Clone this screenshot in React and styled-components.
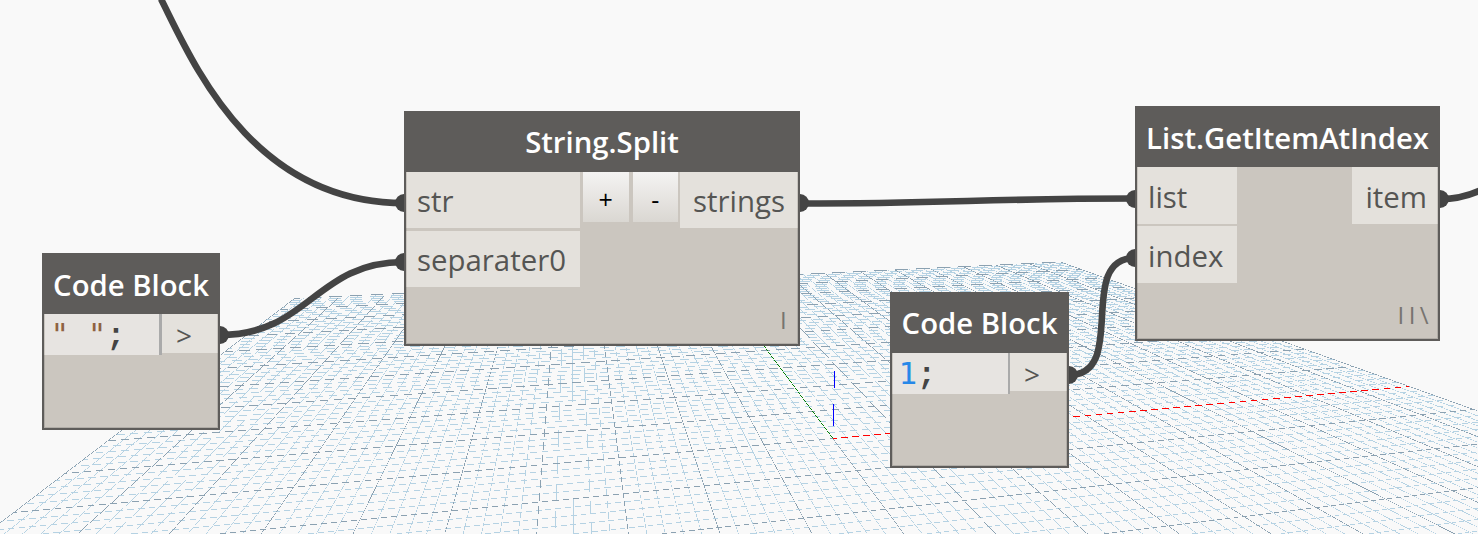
import React from "react";
import styled, { createGlobalStyle } from "styled-components";

const GlobalStyle = createGlobalStyle`
  body { margin: 0; background: #f9f9f9; overflow: hidden; }
  *, *::before, *::after { box-sizing: border-box; }
`;

const Workspace = styled.main`
  position: relative;
  width: 1478px;
  height: 534px;
  overflow: hidden;
  background: #f9f9f9;
  font-family: "Open Sans", sans-serif;
  color: #555553;
`;

const Layer = styled.svg`
  position: absolute;
  inset: 0;
  width: 1478px;
  height: 534px;
`;

const NodeFrame = styled.section`
  position: absolute;
  left: ${(p) => p.$x}px;
  top: ${(p) => p.$y}px;
  width: ${(p) => p.$w}px;
  height: ${(p) => p.$h}px;
  display: flex;
  flex-direction: column;
  border: 2px solid #5e5c5a;
  background: #5e5c5a;
`;

const NodeTitle = styled.header`
  flex: none;
  height: 59px;
  display: flex;
  align-items: center;
  justify-content: center;
  padding-bottom: ${(p) => p.$lift || 0}px;
  color: #fff;
  font-size: 29.3px;
  font-weight: 620;
  line-height: 38px;
  white-space: nowrap;
`;

const NodeBody = styled.div`
  position: relative;
  flex: 1;
  display: flex;
  justify-content: space-between;
  align-items: flex-start;
  background: #cbc6bf;
  box-shadow: inset 1px 0 #b0aca6, inset -1px -1px #b0aca6;
`;

const PortColumn = styled.div`
  display: flex;
  flex-direction: column;
  gap: ${(p) => p.$gap || 0}px;
  width: ${(p) => p.$w}px;
`;

const Port = styled.div`
  height: ${(p) => p.$h || 56}px;
  padding: ${(p) => p.$drop || 1}px ${(p) => p.$inset || 10}px 0;
  display: flex;
  align-items: center;
  justify-content: ${(p) => (p.$out ? "flex-end" : "flex-start")};
  background: #e4e1dc;
  border-${(p) => (p.$out ? "right" : "left")}: 1px solid #c9c5bf;
  font-size: 29.4px;
  line-height: 38px;
`;

const ButtonPair = styled.div`
  flex: 1;
  display: flex;
  gap: 4px;
  padding: 0 2px 0 3px;
`;

const StepButton = styled.button`
  flex: 1;
  height: 50px;
  border: 0;
  padding: 3px 0 0;
  background: linear-gradient(#f4f3f2, #dad7d2);
  color: #000;
  font: 500 25px/30px "Open Sans", sans-serif;
`;

const Lacing = styled.span`
  position: absolute;
  right: ${(p) => p.$right}px;
  bottom: 9px;
  color: #777470;
  font-size: 24px;
  font-weight: 500;
  line-height: 30px;
  letter-spacing: 4.4px;
`;

const CodeRow = styled.div`
  flex: 1;
  display: flex;
  align-items: flex-start;
`;

const CodeEditor = styled.code`
  flex: 1;
  height: 41px;
  padding-left: 5.5px;
  display: flex;
  align-items: baseline;
  background: #e7e4e1;
  border-left: 1px solid #c9c5bf;
  border-right: ${(p) => p.$rule}px solid #aaa;
  font: 31px/41px "DejaVu Sans Mono", monospace;
  white-space: pre;
`;

const Token = styled.span`
  color: ${(p) => p.$color};
`;

const Terminator = styled(Token)`
  font-family: "Liberation Mono", monospace;
  font-weight: 700;
`;

const CodeOutput = styled.div`
  width: ${(p) => p.$w}px;
  height: ${(p) => p.$h}px;
  padding: 0 0 0 14px;
  border-right: 1px solid #c9c5bf;
  background: #e4e1dc;
  font-size: 28px;
  line-height: 42px;
`;

/* Ground plane: u runs along the red axis, v along the green one, both -10..10. */
const ORIGIN = [832.9, 438.53];
const VANISH_U = [4722, 87.4];
const VANISH_V = [571.5, 87.4];
const A = 0.017397;
const B = 0.08378;
const NEAR = -7;

const project = (u, v) => {
  const d = 1 + A * u + B * v;
  return [
    (ORIGIN[0] + A * u * VANISH_U[0] + B * v * VANISH_V[0]) / d,
    (ORIGIN[1] + A * u * VANISH_U[1] + B * v * VANISH_V[1]) / d,
  ];
};

/* A line drawn as a sub-pixel wide strip, so it breaks into dashes when not antialiased. */
const strip = ([x1, y1], [x2, y2], width = 0.6) => {
  const len = Math.hypot(x2 - x1, y2 - y1);
  const nx = (-(y2 - y1) / len) * (width / 2);
  const ny = ((x2 - x1) / len) * (width / 2);
  const f = (n) => n.toFixed(3);
  return `M${f(x1 + nx)} ${f(y1 + ny)}L${f(x2 + nx)} ${f(y2 + ny)}L${f(x2 - nx)} ${f(y2 - ny)}L${f(x1 - nx)} ${f(y1 - ny)}Z`;
};

const minor = [];
const major = [];
for (let i = -50; i <= 50; i++) {
  const t = i / 5;
  const bucket = i % 5 === 0 ? major : minor;
  bucket.push(strip(project(t, NEAR), project(t, 10)));
  if (t >= NEAR) bucket.push(strip(project(-10, t), project(10, t)));
}

function GroundGrid() {
  return (
    <Layer viewBox="0 0 1478 534" shapeRendering="crispEdges">
      {minor.map((d, i) => <path key={i} d={d} fill="#b5d2e3" />)}
      {major.map((d, i) => <path key={i} d={d} fill="#8ba1b1" />)}
      <path d={strip(project(0, 0), project(10, 0))} fill="#f00" />
      <path d={strip(project(0, 0), project(0, 10))} fill="#008000" />
      <path d={strip(ORIGIN, [834.66, 371])} fill="#00f" />
    </Layer>
  );
}

const WIRES = [
  "M161 -1C191 58 250 203 404 203",
  "M220 335C309 335 315 262 404 262",
  "M800 203.5C951 203.5 984 198.5 1135 198.5",
  "M1069 375C1129 375 1075 258 1135 258",
  "M1440 199C1458 199 1471 195 1483 189",
];
const SOCKETS = [
  [404, 203], [404, 262], [220, 335], [800, 203],
  [1135, 199], [1135, 258], [1069, 375], [1440, 199],
];

function Wires() {
  return (
    <Layer viewBox="0 0 1478 534">
      {WIRES.map((d) => <path key={d} d={d} fill="none" stroke="#444" strokeWidth="6.6" />)}
      {SOCKETS.map(([x, y]) => <circle key={`${x},${y}`} cx={x} cy={y} r="9" fill="#444" />)}
    </Layer>
  );
}

function CodeBlock({ x, y, w, h, lift, rule, outW, outH, children }) {
  return (
    <NodeFrame $x={x} $y={y} $w={w} $h={h}>
      <NodeTitle $lift={lift}>Code Block</NodeTitle>
      <NodeBody>
        <CodeRow>
          <CodeEditor $rule={rule}>
            {children}
            <Terminator $color="#444">;</Terminator>
          </CodeEditor>
          <CodeOutput $w={outW} $h={outH}>&gt;</CodeOutput>
        </CodeRow>
      </NodeBody>
    </NodeFrame>
  );
}

export default function App() {
  return (
    <Workspace>
      <GlobalStyle />
      <GroundGrid />
      <Wires />
      <CodeBlock x={42} y={253} w={178} h={177} rule={3} outW={56} outH={39}>
        <Token $color="#8f6241">{'" "'}</Token>
      </CodeBlock>
      <NodeFrame $x={404} $y={111} $w={396} $h={235}>
        <NodeTitle $lift={2}>String.Split</NodeTitle>
        <NodeBody>
          <PortColumn $w={174} $gap={3}>
            <Port>str</Port>
            <Port>separater0</Port>
          </PortColumn>
          <ButtonPair>
            <StepButton>+</StepButton>
            <StepButton>-</StepButton>
          </ButtonPair>
          <PortColumn $w={118}>
            <Port $out $inset={12}>strings</Port>
          </PortColumn>
          <Lacing $right={7}>I</Lacing>
        </NodeBody>
      </NodeFrame>
      <CodeBlock x={890} y={292} w={179} h={176} lift={2} rule={2} outW={57} outH={38}>
        <Token $color="#2788e8">1</Token>
      </CodeBlock>
      <NodeFrame $x={1135} $y={106} $w={305} $h={235}>
        <NodeTitle>List.GetItemAtIndex</NodeTitle>
        <NodeBody>
          <PortColumn $w={100} $gap={2}>
            <Port $h={57} $drop={2}>list</Port>
            <Port $h={57} $drop={2}>index</Port>
          </PortColumn>
          <PortColumn $w={86}>
            <Port $h={57} $drop={2} $out>item</Port>
          </PortColumn>
          <Lacing $right={5}>II\</Lacing>
        </NodeBody>
      </NodeFrame>
    </Workspace>
  );
}
